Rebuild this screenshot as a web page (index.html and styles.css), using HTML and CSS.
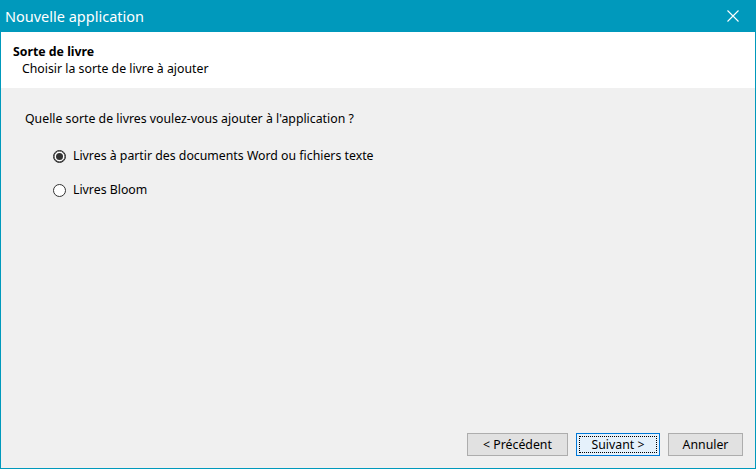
FILE: index.html
```html
<!DOCTYPE html>
<html lang="fr">
<head>
  <meta charset="UTF-8" />
  <title>Nouvelle application</title>
  <link rel="stylesheet" href="styles.css">
</head>
<body>
  <div class="window">
    <div class="titlebar">
      <span class="title">Nouvelle application</span>
      <span class="close">
        <svg width="12" height="12" viewBox="0 0 12 12"><path d="M0.5 0.5 L11.5 11.5 M11.5 0.5 L0.5 11.5" stroke="#fff" stroke-width="1.1" fill="none"/></svg>
      </span>
    </div>
    <div class="header">
      <div class="header-title">Sorte de livre</div>
      <div class="header-sub">Choisir la sorte de livre à ajouter</div>
    </div>
    <div class="content">
      <p class="question">Quelle sorte de livres voulez-vous ajouter à l'application ?</p>
      <div class="options">
        <label class="option"><span class="radio checked"></span>Livres à partir des documents Word ou fichiers texte</label>
        <label class="option"><span class="radio"></span>Livres Bloom</label>
      </div>
    </div>
    <div class="footer">
      <button class="btn btn-prev">&lt; Précédent</button>
      <button class="btn btn-next"><span class="focus">Suivant &gt;</span></button>
      <button class="btn btn-cancel">Annuler</button>
    </div>
  </div>
</body>
</html>
```

FILE: styles.css
```css
:root {
  --accent: #0099bc;
  --panel: #f0f0f0;
  --text: #000;
}

body {
  margin: 0;
  font-family: "Noto Sans", "Open Sans", sans-serif;
  font-size: 12.3px;
  color: var(--text);
}

.window {
  width: 756px;
  height: 469px;
  box-sizing: border-box;
  display: flex;
  flex-direction: column;
  border: 1px solid var(--accent);
  border-top: none;
  background: var(--panel);
}

.titlebar {
  height: 32px;
  flex-shrink: 0;
  background: var(--accent);
  color: #fff;
  display: flex;
  align-items: center;
  justify-content: space-between;
  margin: 0 -1px;
}

.title {
  font-size: 14.5px;
  padding-left: 5px;
  padding-bottom: 1px;
}

.close {
  width: 46px;
  height: 32px;
  display: flex;
  align-items: center;
  justify-content: center;
}

.header {
  height: 56px;
  box-sizing: border-box;
  background: #fff;
  padding: 12px 12px 0;
  line-height: 16px;
}

.header-title {
  font-weight: bold;
}

.header-sub {
  padding-left: 9px;
  margin-top: 1px;
}

.content {
  flex-grow: 1;
  padding: 23px 24px 0;
}

.question {
  margin: 0;
  line-height: 16px;
}

.options {
  display: flex;
  flex-direction: column;
  gap: 18px;
  padding: 21px 0 0 28px;
}

.option {
  display: flex;
  align-items: center;
  gap: 7px;
  line-height: 16px;
}

.radio {
  width: 13px;
  height: 13px;
  box-sizing: border-box;
  border: 1px solid #333;
  border-radius: 50%;
  background: #fff;
  display: flex;
  align-items: center;
  justify-content: center;
  flex-shrink: 0;
}

.radio.checked {
  border-color: #222;
  box-shadow: inset 0 0 0 0.5px #222;
}

.radio.checked::after {
  content: "";
  width: 7px;
  height: 7px;
  border-radius: 50%;
  background: #333;
}

.footer {
  display: flex;
  justify-content: flex-end;
  gap: 8px;
  padding: 0 12px 12px 0;
}

.btn {
  height: 23px;
  box-sizing: border-box;
  font-family: "Noto Sans", "Open Sans", sans-serif;
  font-size: 12.3px;
  color: #000;
  background: #e1e1e1;
  border: 1px solid #adadad;
  padding: 0;
}

.btn-prev {
  width: 101px;
}

.btn-next {
  width: 84px;
  border-color: #0078d7;
  background: #e5f1fb;
  padding: 2px;
}

.btn-next .focus {
  display: flex;
  align-items: center;
  justify-content: center;
  height: 100%;
  box-sizing: border-box;
  border: 1px dotted #000;
}

.btn-cancel {
  width: 75px;
}
```
